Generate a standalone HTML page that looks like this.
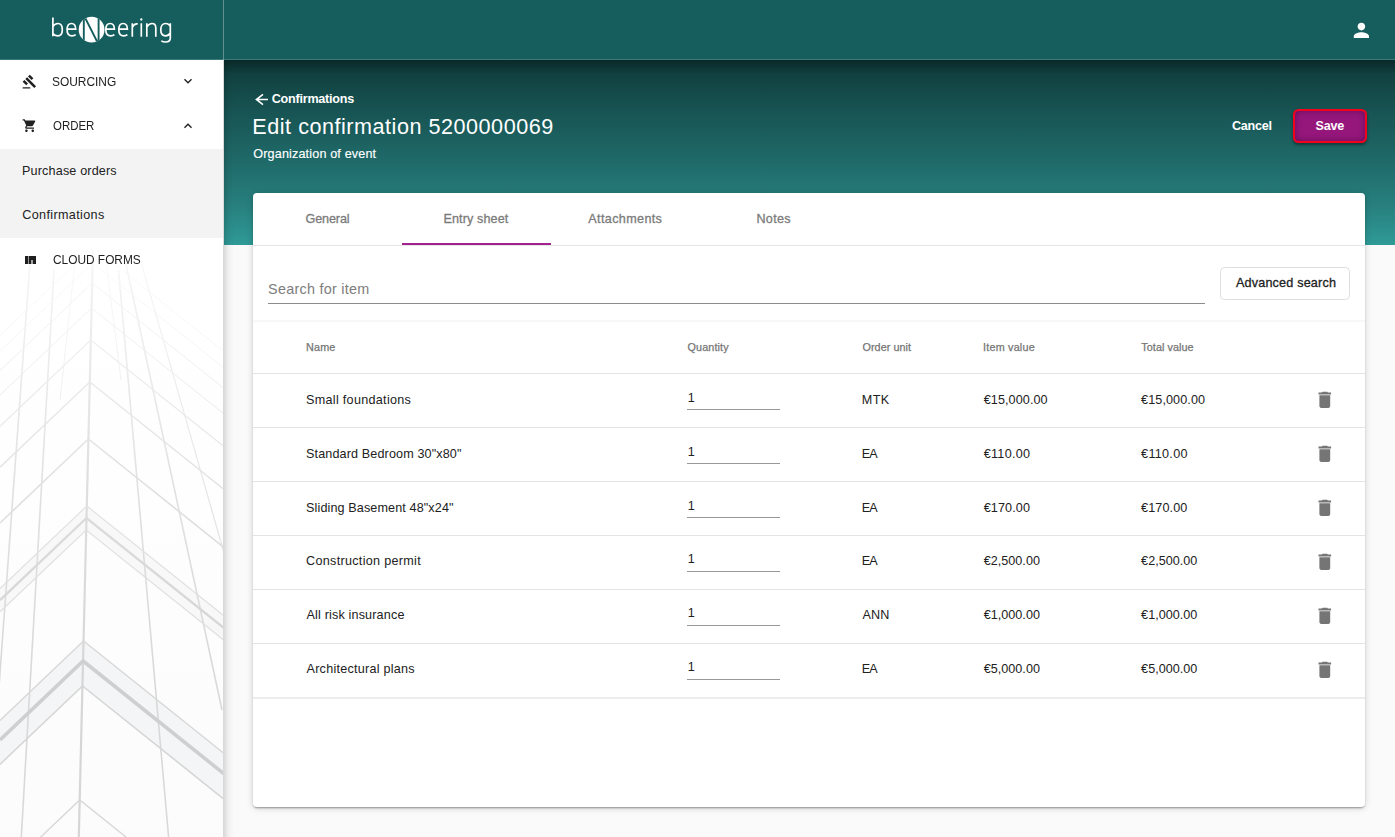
<!DOCTYPE html>
<html><head><meta charset="utf-8">
<style>
*{box-sizing:border-box;margin:0;padding:0}
html,body{width:1395px;height:837px;overflow:hidden;background:#fafafa;font-family:"Liberation Sans",sans-serif;color:#212121}
.a{position:absolute}
.t{position:absolute;white-space:nowrap;line-height:1}
#appbar{left:0;top:0;width:1395px;height:60px;background:#155e5d;z-index:5}
#side{left:0;top:59px;width:224px;height:778px;background:#fff;border-right:1px solid #d9d9d9;z-index:4;overflow:hidden}
#hero{left:224px;top:60px;width:1171px;height:185px;background:linear-gradient(180deg,#092929 0%,#114140 8%,#185655 30%,#1f6a69 55%,#277f7d 78%,#2f9a97 100%);z-index:1}
#card{left:253px;top:193px;width:1112px;height:614px;background:#fff;border-radius:4px;box-shadow:0 2px 2px -1px rgba(0,0,0,.3),0 1px 2px 0 rgba(0,0,0,.08),0 1px 7px 0 rgba(0,0,0,.17);z-index:3;overflow:hidden}
.hl{position:absolute;left:0;width:1112px;height:1px;background:#e4e4e4}
.ql{position:absolute;left:434px;width:93px;height:1px;background:#989898}
</style></head><body>
<div id="appbar" class="a">
  <svg class="a" style="left:0;top:0" width="224" height="59" viewBox="0 0 224 59">
    <g fill="none" stroke="#fff" stroke-width="1.7" stroke-linecap="butt">
      <path d="M52.900 17.400V36.300M52.900 26.600C54 24.600 55.900 23.500 57.900 23.500C60.800 23.500 62.300 26.300 62.300 29.800C62.300 33.400 60.600 35.900 57.700 35.900C55.700 35.900 54 35 52.900 33.400"/>
      <path d="M67.200 29.200H75.700C75.700 25.600 74 23.500 71.500 23.500C68.700 23.500 67.100 26.200 67.100 29.800C67.100 33.500 68.900 35.900 72 35.900C73.600 35.900 74.800 35.500 75.700 34.700"/>
      <path transform="translate(38.700 0)" d="M67.200 29.200H75.700C75.700 25.600 74 23.500 71.500 23.500C68.700 23.500 67.100 26.200 67.100 29.800C67.100 33.500 68.900 35.900 72 35.900C73.600 35.900 74.800 35.500 75.700 34.700"/><path transform="translate(51.700 0)" d="M67.200 29.200H75.700C75.700 25.600 74 23.500 71.500 23.500C68.700 23.500 67.100 26.200 67.100 29.800C67.100 33.500 68.900 35.900 72 35.900C73.600 35.900 74.800 35.500 75.700 34.700"/>
      <path d="M132.300 23.300V36.700M132.300 27.300C133.500 24.700 135.300 23.500 137.700 23.900"/>
      <path d="M141.300 23.300V36.700"/>
      <path d="M146.800 23.300V36.700M146.800 27C148.200 24.800 150 23.500 152 23.500C154.700 23.500 155.800 25.200 155.800 28V36.700"/>
      <path d="M170.300 23.300V38C170.300 40.800 168.500 42 165.500 42C163.800 42 162.400 41.600 161.300 40.900M170.300 26.400C169.200 24.600 167.500 23.500 165.600 23.500C162.600 23.500 160.800 26.200 160.800 29.800C160.800 33.300 162.500 35.800 165.400 35.800C167.500 35.800 169.200 34.800 170.300 33"/>
    </g>
    <circle cx="141.300" cy="19.500" r="1.150" fill="#fff"/>
    <clipPath id="cc"><ellipse cx="91.600" cy="29.700" rx="12.900" ry="12.900"/></clipPath>
    <ellipse cx="91.600" cy="29.700" rx="12.900" ry="12.900" fill="#fff"/>
    <g clip-path="url(#cc)" stroke="#155e5d" stroke-width="1.900" fill="none"><path d="M83.800 46V15.200L98.600 44.500V13"/></g>
  </svg>
  <div class="a" style="left:223px;top:0;width:1px;height:60px;background:rgba(255,255,255,.32)"></div>
  <div class="a" style="left:0;top:59px;width:1395px;height:1px;background:rgba(255,255,255,.17)"></div>
  <svg class="a" style="left:1350px;top:18.600px" width="22.800" height="22.800" viewBox="0 0 24 24"><path fill="#fff" d="M12 12c2.210 0 4-1.790 4-4s-1.790-4-4-4-4 1.790-4 4 1.790 4 4 4zm0 2c-2.670 0-8 1.340-8 4v2h16v-2c0-2.660-5.330-4-8-4z"/></svg>
</div>
<div id="side" class="a">
  <svg class="a" style="left:0;top:0" width="223" height="778" viewBox="0 0 223 778">
<defs><linearGradient id="fg" x1="0" y1="0" x2="0" y2="1"><stop offset="0.21" stop-color="#fff" stop-opacity="0"/><stop offset="0.30" stop-color="#fff" stop-opacity="0.35"/><stop offset="0.55" stop-color="#fff" stop-opacity="0.8"/><stop offset="0.8" stop-color="#fff" stop-opacity="1"/></linearGradient><mask id="fm"><rect width="223" height="778" fill="url(#fg)"/></mask>
<linearGradient id="bg2" x1="0" y1="0" x2="0" y2="1"><stop offset="0.3" stop-color="#000" stop-opacity="0"/><stop offset="1" stop-color="#000" stop-opacity="0.014"/></linearGradient></defs>
<rect width="223" height="778" fill="url(#bg2)"/>
<g mask="url(#fm)" fill="none">
<path d="M0 661.4L83.5 582.0L224 694.4L224 740.2L82.5 627.0L0 705.3Z" fill="#f4f5f6" stroke="none"/>
<path d="M0 529.5L86.8 447.0L224 556.8L224 581.2L86.2 471.0L0 552.9Z" fill="#f7f7f8" stroke="none"/>
<path d="M93.0 191.0L78.8 778.0" stroke="#d6d6d6" stroke-width="2.2"/>
<path d="M54.0 211.0L21.3 778.0" stroke="#d9d9d9" stroke-width="1.6"/>
<path d="M30.0 203.0L-12.0 778.0" stroke="#d9d9d9" stroke-width="1.6"/>
<path d="M118.5 211.0L168.6 778.0" stroke="#d9d9d9" stroke-width="1.6"/>
<path d="M125.5 203.0L222.0 651.0" stroke="#d9d9d9" stroke-width="1.6"/>
<path d="M141.0 203.0L226.0 501.0" stroke="#e0e0e0" stroke-width="1.2"/>
<path d="M75.0 203.0L60.0 341.0" stroke="#e6e6e6" stroke-width="1"/>
<path d="M106.0 203.0L121.0 321.0" stroke="#e6e6e6" stroke-width="1"/>
<path d="M0 276.4L93.1 188.0L224 292.7" stroke="#e6e6e6" stroke-width="0.8" fill="none"/>
<path d="M0 292.1L92.7 204.0L224 309.1" stroke="#e4e4e4" stroke-width="0.8" fill="none"/>
<path d="M0 311.6L92.2 224.0L224 329.4" stroke="#e0e0e0" stroke-width="1" fill="none"/>
<path d="M0 336.0L91.6 249.0L224 354.9" stroke="#dedede" stroke-width="1" fill="none"/>
<path d="M0 367.3L90.8 281.0L224 387.5" stroke="#dcdcdc" stroke-width="1.2" fill="none"/>
<path d="M0 408.3L89.8 323.0L224 430.4" stroke="#dadada" stroke-width="1.4" fill="none"/>
<path d="M0 464.0L88.4 380.0L224 488.5" stroke="#d8d8d8" stroke-width="1.6" fill="none"/>
<path d="M0 529.5L86.8 447.0L224 556.8" stroke="#dcdcdc" stroke-width="1.2" fill="none"/>
<path d="M0 541.2L86.5 459.0L224 569.0" stroke="#d4d4d4" stroke-width="2.4" fill="none"/>
<path d="M0 552.9L86.2 471.0L224 581.2" stroke="#dcdcdc" stroke-width="1.2" fill="none"/>
<path d="M0 661.4L83.5 582.0L224 694.4" stroke="#d8d8d8" stroke-width="1.4" fill="none"/>
<path d="M0 680.9L83.1 602.0L224 714.8" stroke="#cfcfcf" stroke-width="3.6" fill="none"/>
<path d="M0 705.3L82.5 627.0L224 740.2" stroke="#d6d6d6" stroke-width="1.6" fill="none"/>
<path d="M0 816.7L79.7 741.0L224 856.4" stroke="#d8d8d8" stroke-width="1.4" fill="none"/>
</g></svg>
  <div class="a" style="left:0;top:89.500px;width:223px;height:89.500px;background:rgba(236,236,236,.62)"></div>
  <svg class="a" style="left:22.100px;top:15.100px" width="15.200" height="15.200" viewBox="0 0 24 24"><path fill="#212121" d="M1 21h12v2H1zM5.245 8.070l2.830-2.827 14.140 14.142-2.828 2.827zM12.317 1l5.657 5.656-2.830 2.830-5.654-5.660zM3.825 9.485l5.657 5.657-2.828 2.828-5.657-5.657z"/></svg>
  <svg class="a" style="left:22.300px;top:59.400px" width="15.200" height="15.200" viewBox="0 0 24 24"><path fill="#212121" d="M7 18c-1.100 0-1.990.9-1.990 2S5.900 22 7 22s2-.9 2-2-.9-2-2-2zM1 2v2h2l3.600 7.590-1.350 2.450c-.16.280-.25.610-.25.960 0 1.100.9 2 2 2h12v-2H7.420c-.14 0-.25-.110-.25-.25l.03-.12.900-1.630h7.450c.75 0 1.410-.41 1.750-1.030l3.580-6.490c.08-.14.120-.31.120-.48 0-.55-.45-1-1-1H5.210l-.94-2H1zm16 16c-1.100 0-1.990.9-1.990 2s.89 2 1.990 2 2-.9 2-2-.9-2-2-2z"/></svg>
  <svg class="a" style="left:180px;top:14.300px" width="16" height="16" viewBox="0 0 24 24"><path fill="#212121" d="M16.590 8.590L12 13.170 7.410 8.590 6 10l6 6 6-6z"/></svg>
  <svg class="a" style="left:180px;top:59.300px" width="16" height="16" viewBox="0 0 24 24"><path fill="#212121" d="M12 8l-6 6 1.410 1.410L12 10.830l4.590 4.580L18 14z"/></svg>
  <div class="a" style="left:24.900px;top:196.900px;width:10.700px;height:7.900px;background:#1f1f1f"></div>
  <div class="a" style="left:27.900px;top:196.900px;width:1.100px;height:7.900px;background:#9a9a9a"></div>
  <div class="a" style="left:31.100px;top:200.700px;width:2.200px;height:4.100px;background:#a4a4a4"></div>
</div>
<div class="a" style="left:224px;top:59px;width:10px;height:778px;background:linear-gradient(90deg,rgba(0,0,0,.13),rgba(0,0,0,.04) 45%,rgba(0,0,0,0));z-index:2"></div>
<div id="hero" class="a"></div>
<svg class="a" style="left:253px;top:91px;z-index:6" width="18" height="18" viewBox="0 0 18 18"><path d="M15 8.500H3.900M10 3.400L3.400 8.500L10 13.600" fill="none" stroke="#fff" stroke-width="1.600"/></svg>
<div class="a" style="left:1292.500px;top:108.700px;width:74px;height:34px;border:2px solid #f2021c;border-radius:5.500px;background:#96177c;z-index:5;box-shadow:0 2px 3px rgba(0,0,0,.4),inset 0 0 7px rgba(40,0,40,.45)"></div>
<div id="card" class="a">
  <div class="a" style="left:149px;top:50px;width:149px;height:2px;background:#a3228f"></div>
  <div class="hl" style="top:52px;background:#e6e6e6"></div>
  <div class="a" style="left:15px;top:110px;width:937px;height:1px;background:#8c8c8c"></div>
  <div class="a" style="left:967px;top:74px;width:130px;height:33px;border:1px solid #dedede;border-radius:4.500px"></div>
  <div class="a" style="left:0;top:127px;width:1112px;height:2px;background:#f8f8f8"></div>
  <div class="hl" style="top:180px"></div>
  <div class="hl" style="top:234px"></div>
  <div class="hl" style="top:288px"></div>
  <div class="hl" style="top:342px"></div>
  <div class="hl" style="top:396px"></div>
  <div class="hl" style="top:450px"></div>
  <div class="hl" style="top:504px;height:2px;background:#ececec"></div>
  <div class="ql" style="top:216px"></div>
  <svg class="a" style="left:1060.700px;top:196.2px" width="21.600" height="21.600" viewBox="0 0 24 24"><path fill="#757575" d="M6 19c0 1.100.9 2 2 2h8c1.100 0 2-.9 2-2V7H6v12zM19 4h-3.500l-1-1h-5l-1 1H5v2h14V4z"/></svg>
  <div class="ql" style="top:270px"></div>
  <svg class="a" style="left:1060.700px;top:250.2px" width="21.600" height="21.600" viewBox="0 0 24 24"><path fill="#757575" d="M6 19c0 1.100.9 2 2 2h8c1.100 0 2-.9 2-2V7H6v12zM19 4h-3.500l-1-1h-5l-1 1H5v2h14V4z"/></svg>
  <div class="ql" style="top:324px"></div>
  <svg class="a" style="left:1060.700px;top:304.2px" width="21.600" height="21.600" viewBox="0 0 24 24"><path fill="#757575" d="M6 19c0 1.100.9 2 2 2h8c1.100 0 2-.9 2-2V7H6v12zM19 4h-3.500l-1-1h-5l-1 1H5v2h14V4z"/></svg>
  <div class="ql" style="top:378px"></div>
  <svg class="a" style="left:1060.700px;top:358.1px" width="21.600" height="21.600" viewBox="0 0 24 24"><path fill="#757575" d="M6 19c0 1.100.9 2 2 2h8c1.100 0 2-.9 2-2V7H6v12zM19 4h-3.500l-1-1h-5l-1 1H5v2h14V4z"/></svg>
  <div class="ql" style="top:432px"></div>
  <svg class="a" style="left:1060.700px;top:412.1px" width="21.600" height="21.600" viewBox="0 0 24 24"><path fill="#757575" d="M6 19c0 1.100.9 2 2 2h8c1.100 0 2-.9 2-2V7H6v12zM19 4h-3.500l-1-1h-5l-1 1H5v2h14V4z"/></svg>
  <div class="ql" style="top:486px"></div>
  <svg class="a" style="left:1060.700px;top:466.1px" width="21.600" height="21.600" viewBox="0 0 24 24"><path fill="#757575" d="M6 19c0 1.100.9 2 2 2h8c1.100 0 2-.9 2-2V7H6v12zM19 4h-3.500l-1-1h-5l-1 1H5v2h14V4z"/></svg>
</div>
<div class="t" id="t0" style="left:51.82px;top:76.16px;font-size:12.6px;color:#212121;z-index:6;transform:scaleX(0.9468);transform-origin:0 0;">SOURCING</div>
<div class="t" id="t1" style="left:52.50px;top:120.16px;font-size:12.6px;color:#212121;z-index:6;transform:scaleX(0.9089);transform-origin:0 0;">ORDER</div>
<div class="t" id="t2" style="left:22.03px;top:165.15px;font-size:12.6px;color:#212121;z-index:6;letter-spacing:0.161px;">Purchase orders</div>
<div class="t" id="t3" style="left:22.25px;top:209.15px;font-size:12.6px;color:#212121;z-index:6;letter-spacing:0.356px;">Confirmations</div>
<div class="t" id="t4" style="left:52.50px;top:254.16px;font-size:12.6px;color:#212121;z-index:6;transform:scaleX(0.9430);transform-origin:0 0;">CLOUD FORMS</div>
<div class="t" id="t5" style="left:271.77px;top:93.16px;font-size:12.6px;color:#ffffff;z-index:6;font-weight:700;letter-spacing:-0.244px;">Confirmations</div>
<div class="t" id="t6" style="left:252.35px;top:116.15px;font-size:21.6px;color:#ffffff;z-index:6;letter-spacing:0.517px;">Edit confirmation 5200000069</div>
<div class="t" id="t7" style="left:253.28px;top:148.16px;font-size:12.6px;color:#ffffff;z-index:6;letter-spacing:0.157px;-webkit-text-stroke:0.15px #ffffff;">Organization of event</div>
<div class="t" id="t8" style="left:1231.88px;top:120.15px;font-size:12.6px;color:#ffffff;z-index:6;font-weight:700;letter-spacing:-0.225px;">Cancel</div>
<div class="t" id="t9" style="left:1315.47px;top:120.15px;font-size:12.6px;color:#ffffff;z-index:6;font-weight:700;letter-spacing:-0.225px;">Save</div>
<div class="t" id="t10" style="left:305.48px;top:213.15px;font-size:12.6px;color:#7b7b7b;z-index:6;letter-spacing:-0.113px;-webkit-text-stroke:0.3px #7b7b7b;">General</div>
<div class="t" id="t11" style="left:443.43px;top:213.15px;font-size:12.6px;color:#7b7b7b;z-index:6;letter-spacing:0.113px;-webkit-text-stroke:0.3px #7b7b7b;">Entry sheet</div>
<div class="t" id="t12" style="left:588.32px;top:213.15px;font-size:12.6px;color:#7b7b7b;z-index:6;letter-spacing:0.360px;-webkit-text-stroke:0.3px #7b7b7b;">Attachments</div>
<div class="t" id="t13" style="left:756.42px;top:213.15px;font-size:12.6px;color:#7b7b7b;z-index:6;letter-spacing:0.338px;-webkit-text-stroke:0.3px #7b7b7b;">Notes</div>
<div class="t" id="t14" style="left:268.05px;top:282.16px;font-size:14.4px;color:#7d7d7d;z-index:6;letter-spacing:0.257px;">Search for item</div>
<div class="t" id="t15" style="left:1235.92px;top:277.15px;font-size:12.6px;color:#212121;z-index:6;letter-spacing:0.193px;-webkit-text-stroke:0.3px #212121;">Advanced search</div>
<div class="t" id="t16" style="left:306.05px;top:342.16px;font-size:10.8px;color:#757575;z-index:6;letter-spacing:0.150px;-webkit-text-stroke:0.25px #757575;">Name</div>
<div class="t" id="t17" style="left:687.50px;top:342.16px;font-size:10.8px;color:#757575;z-index:6;letter-spacing:0.129px;-webkit-text-stroke:0.25px #757575;">Quantity</div>
<div class="t" id="t18" style="left:862.50px;top:342.16px;font-size:10.8px;color:#757575;z-index:6;letter-spacing:0.050px;-webkit-text-stroke:0.25px #757575;">Order unit</div>
<div class="t" id="t19" style="left:983.05px;top:342.16px;font-size:10.8px;color:#757575;z-index:6;letter-spacing:0.200px;-webkit-text-stroke:0.25px #757575;">Item value</div>
<div class="t" id="t20" style="left:1141.33px;top:342.16px;font-size:10.8px;color:#757575;z-index:6;letter-spacing:0.067px;-webkit-text-stroke:0.25px #757575;">Total value</div>
<div class="t" id="t21" style="left:306.05px;top:394.15px;font-size:12.6px;color:#212121;z-index:6;letter-spacing:0.295px;">Small foundations</div>
<div class="t" id="t22" style="left:687.63px;top:392.16px;font-size:12.6px;color:#212121;z-index:6;">1</div>
<div class="t" id="t23" style="left:861.82px;top:394.16px;font-size:12.6px;color:#212121;z-index:6;letter-spacing:0.338px;">MTK</div>
<div class="t" id="t24" style="left:983.70px;top:394.16px;font-size:12.6px;color:#212121;z-index:6;letter-spacing:0.100px;">€15,000.00</div>
<div class="t" id="t25" style="left:1141.10px;top:394.16px;font-size:12.6px;color:#212121;z-index:6;letter-spacing:0.100px;">€15,000.00</div>
<div class="t" id="t26" style="left:306.05px;top:448.16px;font-size:12.6px;color:#212121;z-index:6;letter-spacing:0.127px;">Standard Bedroom 30&quot;x80&quot;</div>
<div class="t" id="t27" style="left:687.63px;top:446.16px;font-size:12.6px;color:#212121;z-index:6;">1</div>
<div class="t" id="t28" style="left:861.82px;top:448.16px;font-size:12.6px;color:#212121;z-index:6;letter-spacing:-0.900px;">EA</div>
<div class="t" id="t29" style="left:983.70px;top:448.16px;font-size:12.6px;color:#212121;z-index:6;letter-spacing:0.300px;">€110.00</div>
<div class="t" id="t30" style="left:1141.10px;top:448.16px;font-size:12.6px;color:#212121;z-index:6;letter-spacing:0.300px;">€110.00</div>
<div class="t" id="t31" style="left:306.05px;top:502.16px;font-size:12.6px;color:#212121;z-index:6;letter-spacing:0.117px;">Sliding Basement 48&quot;x24&quot;</div>
<div class="t" id="t32" style="left:687.63px;top:500.15px;font-size:12.6px;color:#212121;z-index:6;">1</div>
<div class="t" id="t33" style="left:861.82px;top:502.15px;font-size:12.6px;color:#212121;z-index:6;letter-spacing:-0.900px;">EA</div>
<div class="t" id="t34" style="left:983.70px;top:502.15px;font-size:12.6px;color:#212121;z-index:6;letter-spacing:0.112px;">€170.00</div>
<div class="t" id="t35" style="left:1141.10px;top:502.15px;font-size:12.6px;color:#212121;z-index:6;letter-spacing:0.113px;">€170.00</div>
<div class="t" id="t36" style="left:306.05px;top:555.16px;font-size:12.6px;color:#212121;z-index:6;letter-spacing:0.300px;">Construction permit</div>
<div class="t" id="t37" style="left:687.63px;top:553.15px;font-size:12.6px;color:#212121;z-index:6;">1</div>
<div class="t" id="t38" style="left:861.82px;top:555.15px;font-size:12.6px;color:#212121;z-index:6;letter-spacing:-0.900px;">EA</div>
<div class="t" id="t39" style="left:983.70px;top:555.15px;font-size:12.6px;color:#212121;z-index:6;letter-spacing:0.028px;">€2,500.00</div>
<div class="t" id="t40" style="left:1141.10px;top:555.15px;font-size:12.6px;color:#212121;z-index:6;letter-spacing:0.028px;">€2,500.00</div>
<div class="t" id="t41" style="left:306.50px;top:609.16px;font-size:12.6px;color:#212121;z-index:6;letter-spacing:0.159px;">All risk insurance</div>
<div class="t" id="t42" style="left:687.63px;top:607.16px;font-size:12.6px;color:#212121;z-index:6;">1</div>
<div class="t" id="t43" style="left:862.50px;top:609.16px;font-size:12.6px;color:#212121;z-index:6;letter-spacing:0.113px;">ANN</div>
<div class="t" id="t44" style="left:983.70px;top:609.16px;font-size:12.6px;color:#212121;z-index:6;letter-spacing:0.028px;">€1,000.00</div>
<div class="t" id="t45" style="left:1141.10px;top:609.16px;font-size:12.6px;color:#212121;z-index:6;letter-spacing:0.028px;">€1,000.00</div>
<div class="t" id="t46" style="left:306.50px;top:663.15px;font-size:12.6px;color:#212121;z-index:6;letter-spacing:0.250px;">Architectural plans</div>
<div class="t" id="t47" style="left:687.63px;top:661.16px;font-size:12.6px;color:#212121;z-index:6;">1</div>
<div class="t" id="t48" style="left:861.82px;top:663.16px;font-size:12.6px;color:#212121;z-index:6;letter-spacing:-0.900px;">EA</div>
<div class="t" id="t49" style="left:983.70px;top:663.16px;font-size:12.6px;color:#212121;z-index:6;letter-spacing:0.028px;">€5,000.00</div>
<div class="t" id="t50" style="left:1141.10px;top:663.16px;font-size:12.6px;color:#212121;z-index:6;letter-spacing:0.028px;">€5,000.00</div>
</body></html>
